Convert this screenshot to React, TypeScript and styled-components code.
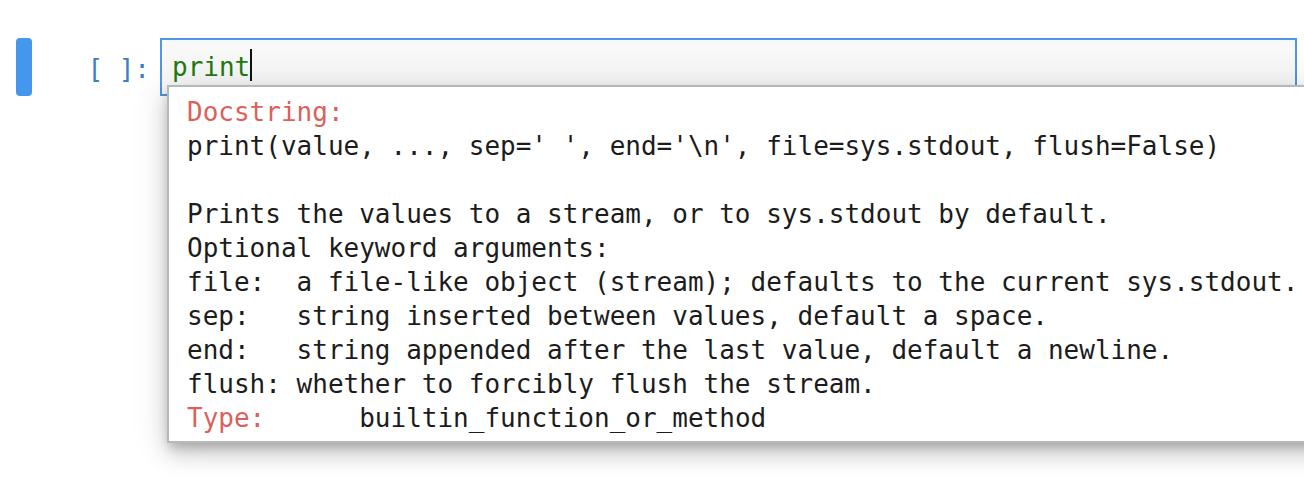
import styled, { createGlobalStyle } from "styled-components";

const GlobalStyle = createGlobalStyle`
  html, body {
    margin: 0;
    padding: 0;
    background: #ffffff;
    overflow: hidden;
  }
  body {
    font-family: "DejaVu Sans Mono", "Liberation Mono", monospace;
  }
`;

const mono = `"DejaVu Sans Mono", "Liberation Mono", monospace`;

const Notebook = styled.div`
  width: 1304px;
  height: 480px;
  box-sizing: border-box;
  padding: 38px 7px 0 16px;
`;

const Cell = styled.div`
  position: relative;
  display: flex;
  align-items: stretch;
  height: 58px;
`;

const Collapser = styled.div`
  width: 16px;
  flex: none;
  border-radius: 4px;
  background: #4597ed;
`;

const Prompt = styled.div`
  width: 128px;
  flex: none;
  box-sizing: border-box;
  padding-right: 10px;
  display: flex;
  align-items: center;
  justify-content: flex-end;
  font-family: ${mono};
  font-size: 26px;
  color: #3a80c6;
  white-space: pre;
  padding-top: 4px;
`;

const Editor = styled.div`
  flex: 1;
  box-sizing: border-box;
  border: 2px solid #4f95e8;
  background: #f8f8f8;
  display: flex;
  align-items: center;
  padding: 0 10px;
  font-family: ${mono};
  font-size: 26px;
  line-height: 34px;
`;

const Builtin = styled.span`
  color: #1f7a12;
`;

const Cursor = styled.span`
  display: inline-block;
  width: 2px;
  height: 32px;
  background: #111;
  vertical-align: middle;
  margin-top: -4px;
`;

const Tooltip = styled.div`
  position: absolute;
  top: 47px;
  left: 151px;
  width: 1180px;
  box-sizing: border-box;
  padding: 8px 18px 6px;
  background: #ffffff;
  border: 2px solid #b8b8b8;
  box-shadow: 0 6px 10px -2px rgba(0, 0, 0, 0.2),
    0 12px 20px 0 rgba(0, 0, 0, 0.14), 0 2px 36px 0 rgba(0, 0, 0, 0.12);
`;

const Doc = styled.pre`
  margin: 0;
  font-family: ${mono};
  font-size: 26px;
  line-height: 34px;
  color: #1c1c1c;
  white-space: pre;
`;

const Label = styled.span`
  color: #dd5f5b;
`;

const docLines = [
  "Prints the values to a stream, or to sys.stdout by default.",
  "Optional keyword arguments:",
  "file:  a file-like object (stream); defaults to the current sys.stdout.",
  "sep:   string inserted between values, default a space.",
  "end:   string appended after the last value, default a newline.",
  "flush: whether to forcibly flush the stream.",
];

const App = () => {
  return (
    <>
      <GlobalStyle />
      <Notebook>
        <Cell>
          <Collapser />
          <Prompt>[ ]:</Prompt>
          <Editor>
            <Builtin>print</Builtin>
            <Cursor />
          </Editor>
          <Tooltip>
            <Doc>
              <Label>Docstring:</Label>
              {"\n"}
              {"print(value, ..., sep=' ', end='\\n', file=sys.stdout, flush=False)"}
              {"\n\n"}
              {docLines.join("\n")}
              {"\n"}
              <Label>Type:</Label>
              {"      builtin_function_or_method"}
            </Doc>
          </Tooltip>
        </Cell>
      </Notebook>
    </>
  );
};

export default App;
